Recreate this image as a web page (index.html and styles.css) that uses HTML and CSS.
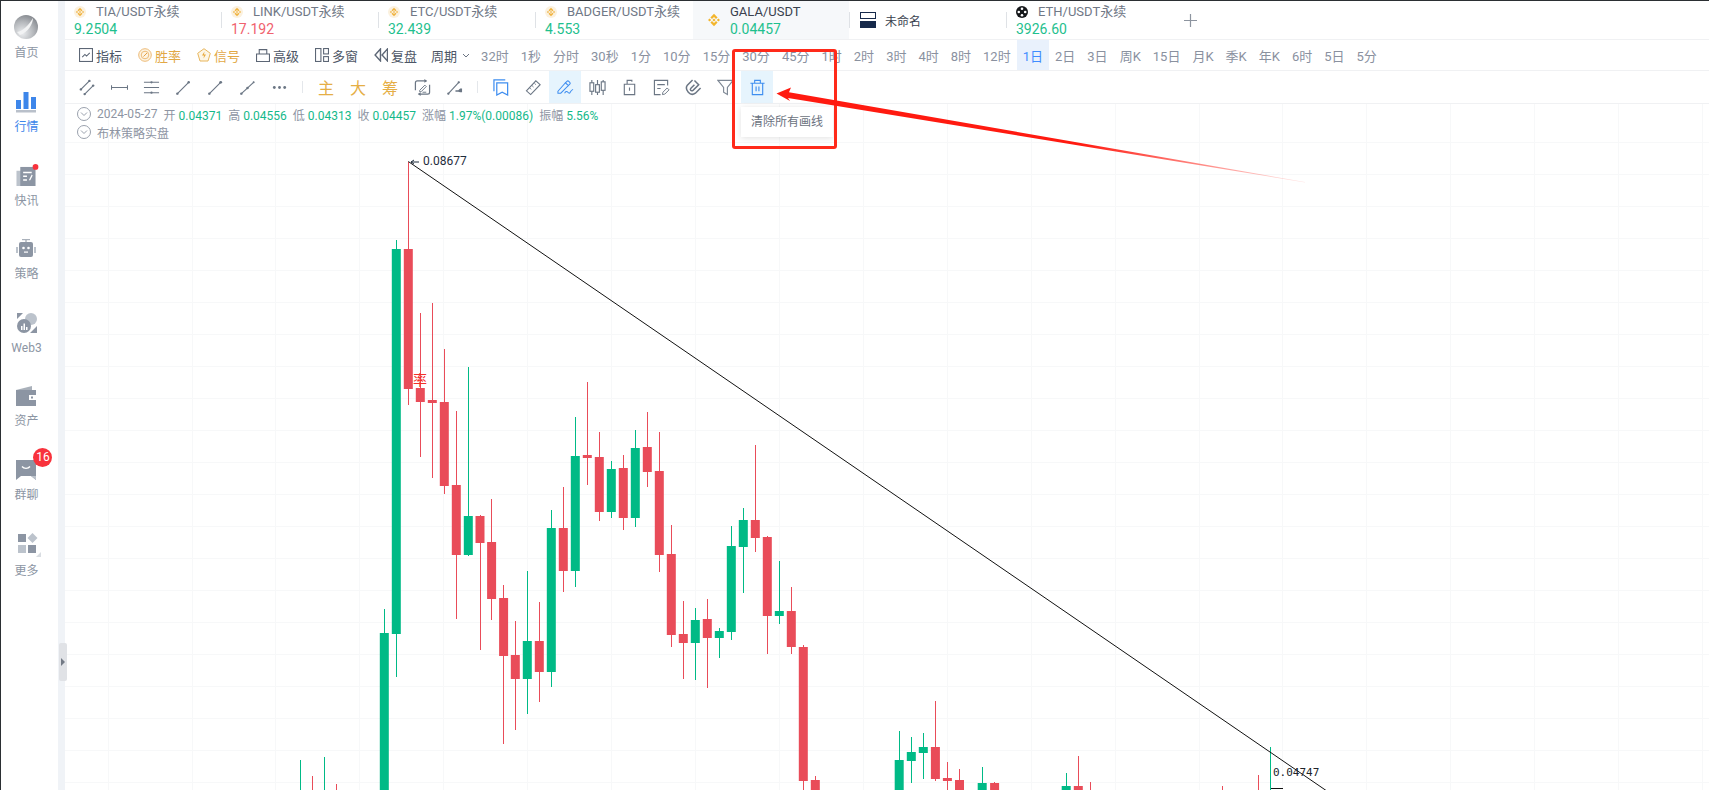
FILE: index.html
```html
<!DOCTYPE html>
<html lang="zh-CN">
<head>
    <meta charset="UTF-8">
    <title>GALA/USDT 行情</title>
    <link rel="stylesheet" href="styles.css">
</head>
<body>

<!-- left nav -->
<nav class="sidebar">
    <a class="nav-item nav-first">
        <svg class="nav-logo" viewBox="0 0 24 24">
            <defs>
                <radialGradient id="ball" cx="35%" cy="75%" r="85%">
                    <stop offset="0" stop-color="#eceef0"/>
                    <stop offset="0.55" stop-color="#b4b7bb"/>
                    <stop offset="1" stop-color="#7d8187"/>
                </radialGradient>
                <path id="bn" d="M7 0.800L10.600 4.400L9 6L7 4L5 6L3.400 4.400ZM7 13.200L3.400 9.600L5 8L7 10L9 8L10.600 9.600ZM2.600 5.400L4.200 7L2.600 8.600L1 7ZM11.400 5.400L13 7L11.400 8.600L9.800 7ZM7 5.400L8.600 7L7 8.600L5.400 7Z"/>
            </defs>
            <circle cx="12" cy="12" r="12" fill="url(#ball)"/>
            <path d="M3 17C9 16 15 10 19 3C19 9 14 17 6 20Z" fill="#f2f3f4"/>
        </svg>
        <span>首页</span>
    </a>
    <a class="nav-item active">
        <svg class="nav-icon" viewBox="0 0 20 20">
            <rect x="0" y="8" width="5" height="9" fill="#3d86ea"/>
            <rect x="7.5" y="0" width="5" height="17" fill="#3d86ea"/>
            <rect x="15" y="5" width="5" height="12" fill="#3d86ea"/>
            <rect x="0" y="18" width="20" height="2.5" fill="#b9c0ca"/>
        </svg>
        <span>行情</span>
    </a>
    <a class="nav-item">
        <svg class="nav-icon" viewBox="0 0 20 21">
            <rect x="0" y="5" width="6" height="16" fill="#bcc3cc"/>
            <rect x="4" y="1" width="16" height="20" fill="#8c95a3"/>
            <path d="M7 6H16V7.5H7ZM7 10H11V11.5H7ZM7 14H11V15.5H7ZM16 9L13 15H14.5L17 10Z" fill="#fff"/>
            <circle cx="20" cy="1" r="3" fill="#f8323c" class="nav-dot"/>
        </svg>
        <span>快讯</span>
    </a>
    <a class="nav-item">
        <svg class="nav-icon" viewBox="0 0 20 20">
            <rect x="9.3" y="0" width="1.4" height="3" fill="#aab1bb"/>
            <rect x="6" y="0" width="8" height="1.2" fill="#aab1bb"/>
            <rect x="0" y="8" width="2" height="6" fill="#bcc3cc"/>
            <rect x="18" y="8" width="2" height="6" fill="#bcc3cc"/>
            <rect x="3" y="3" width="14" height="15" rx="2" fill="#8c95a3"/>
            <circle cx="7.5" cy="9" r="1.3" fill="#fff"/>
            <circle cx="12.5" cy="9" r="1.3" fill="#fff"/>
            <rect x="8" y="12.5" width="4" height="1.2" fill="#fff"/>
        </svg>
        <span>策略</span>
    </a>
    <a class="nav-item">
        <svg class="nav-icon" viewBox="0 0 20 20">
            <path d="M0 0H6L0 6ZM20 20H13L20 13Z" fill="#8c95a3"/>
            <circle cx="14" cy="6" r="6" fill="#bcc3cc"/>
            <circle cx="7" cy="13" r="7" fill="#8c95a3"/>
            <path d="M4 13H5.5V17H4ZM6.5 10.5H8V17H6.5ZM9 14H10.5V17H9Z" fill="#fff"/>
        </svg>
        <span>Web3</span>
    </a>
    <a class="nav-item">
        <svg class="nav-icon" viewBox="0 0 20 20">
            <path d="M0 4L16 0V4Z" fill="#a9b0ba"/>
            <rect x="0" y="4" width="20" height="16" fill="#8c95a3"/>
            <rect x="13" y="9" width="7" height="5" fill="#fff"/>
            <rect x="15" y="10.5" width="2" height="2" fill="#8c95a3"/>
        </svg>
        <span>资产</span>
    </a>
    <a class="nav-item nav-chat">
        <svg class="nav-icon" viewBox="0 0 20 20">
            <path d="M0 0H20V20L15 16H5L0 20Z" fill="#8c95a3"/>
            <path d="M6 16H15L20 20V16Z" fill="#bcc3cc"/>
            <path d="M6 6.5C8 9 12 9 14 6.5" fill="none" stroke="#fff" stroke-width="1.4"/>
        </svg>
        <em class="nav-badge">16</em>
        <span>群聊</span>
    </a>
    <a class="nav-item nav-more">
        <svg class="nav-logo" viewBox="0 0 24 24">
            <rect x="1" y="1" width="8" height="8" fill="#8c95a3"/>
            <path d="M15.5 0L20.5 5L15.5 10L10.500 5Z" fill="#bcc3cc"/>
            <rect x="1" y="12" width="8" height="8" fill="#bcc3cc"/>
            <rect x="11" y="12" width="8" height="8" fill="#8c95a3"/>
            <path d="M19 24L24 19V24Z" fill="#d9dde2"/>
        </svg>
        <span>更多</span>
    </a>
</nav>

<div class="rail">
    <button class="rail-toggle"></button>
</div>

<div class="main">
    <!-- tabs -->
    <div class="tabs">
        <div class="tab">
            <div class="tab-name"><svg class="coin" viewBox="0 0 14 14"><circle cx="7" cy="7" r="7" fill="#fbf1df"/><use href="#bn" fill="#f0b340" transform="translate(1.4 1.4) scale(0.8)"/></svg>TIA/USDT永续</div>
            <div class="tab-price up">9.2504</div>
        </div>
        <i class="tab-sep"></i>
        <div class="tab">
            <div class="tab-name"><svg class="coin" viewBox="0 0 14 14"><circle cx="7" cy="7" r="7" fill="#fbf1df"/><use href="#bn" fill="#f0b340" transform="translate(1.4 1.4) scale(0.8)"/></svg>LINK/USDT永续</div>
            <div class="tab-price down">17.192</div>
        </div>
        <i class="tab-sep"></i>
        <div class="tab">
            <div class="tab-name"><svg class="coin" viewBox="0 0 14 14"><circle cx="7" cy="7" r="7" fill="#fbf1df"/><use href="#bn" fill="#f0b340" transform="translate(1.4 1.4) scale(0.8)"/></svg>ETC/USDT永续</div>
            <div class="tab-price up">32.439</div>
        </div>
        <i class="tab-sep"></i>
        <div class="tab">
            <div class="tab-name"><svg class="coin" viewBox="0 0 14 14"><circle cx="7" cy="7" r="7" fill="#fbf1df"/><use href="#bn" fill="#f0b340" transform="translate(1.4 1.4) scale(0.8)"/></svg>BADGER/USDT永续</div>
            <div class="tab-price up">4.553</div>
        </div>
        <div class="tab tab-active">
            <svg class="coin-big" viewBox="0 0 14 14"><use href="#bn" fill="#f3b52c"/></svg>
            <div>
                <div class="tab-name dark">GALA/USDT</div>
                <div class="tab-price up">0.04457</div>
            </div>
        </div>
        <i class="tab-sep"></i>
        <div class="tab tab-layout">
            <svg class="layout-icon" viewBox="0 0 16 16"><rect x="0.500" y="0.500" width="15" height="6" fill="none" stroke="#16294a"/><rect x="0" y="9" width="16" height="7" fill="#16294a"/></svg>
            <span>未命名</span>
        </div>
        <i class="tab-sep"></i>
        <div class="tab tab-eth">
            <div class="tab-name"><svg class="coin" viewBox="0 0 12 12"><circle cx="6" cy="6" r="6" fill="#15171a"/><circle cx="6" cy="2.800" r="1.300" fill="#fff"/><circle cx="6" cy="9.200" r="1.300" fill="#fff"/><circle cx="2.800" cy="6" r="1.300" fill="#fff"/><circle cx="9.200" cy="6" r="1.300" fill="#fff"/></svg>ETH/USDT永续</div>
            <div class="tab-price up">3926.60</div>
        </div>
        <svg class="tab-add" viewBox="0 0 13 13"><path d="M6.500 0V13M0 6.500H13" stroke="#8d949f" stroke-width="1.200"/></svg>
    </div>

    <!-- indicators + periods -->
    <div class="bar">
        <div class="bar-item">
            <svg class="bar-icon" viewBox="0 0 13 13"><rect x="0.500" y="0.500" width="12" height="12" fill="none" stroke="#5c6675"/><path d="M3 8.500L5.500 6L7 7.500L10 4.500" fill="none" stroke="#5c6675"/></svg>指标
        </div>
        <div class="bar-item gold">
            <svg class="bar-icon" viewBox="0 0 14 14"><circle cx="7" cy="7" r="6.300" fill="#fdf3e2" stroke="#edbb78"/><circle cx="7" cy="7" r="3.800" fill="none" stroke="#edbb78"/><path d="M5.500 8.500L9 5" stroke="#e59f45"/></svg>胜率
        </div>
        <div class="bar-item gold">
            <svg class="bar-icon" viewBox="0 0 14 14"><path d="M7 0.700L13.300 5.300L11 13H3L0.700 5.300Z" fill="#fdf6e6" stroke="#e8b65c"/><path d="M7.500 3.500L5 7.500H7L6.500 10.500L9 6.500H7Z" fill="#e8a93c"/></svg>信号
        </div>
        <div class="bar-item">
            <svg class="bar-icon" viewBox="0 0 13 13"><path d="M0.500 5.500H12.500V12.500H0.500ZM3 5.500V1.500H10V5.500" fill="none" stroke="#5c6675"/></svg>高级
        </div>
        <div class="bar-item">
            <svg class="bar-icon" viewBox="0 0 13 13"><rect x="0.500" y="0.500" width="5" height="12" fill="none" stroke="#5c6675"/><rect x="8" y="0.500" width="4.500" height="5" fill="none" stroke="#5c6675"/><rect x="8" y="8" width="4.500" height="4.500" fill="none" stroke="#5c6675"/></svg>多窗
        </div>
        <div class="bar-item">
            <svg class="bar-icon" viewBox="0 0 13 13"><path d="M6 1L1 6.500L6 12ZM12.500 1L7.500 6.500L12.500 12Z" fill="none" stroke="#5c6675" stroke-width="1.300"/></svg>复盘
        </div>
        <div class="bar-item bar-select">
            周期
            <svg class="chevron" viewBox="0 0 8 5"><path d="M1 1L4 4L7 1" fill="none" stroke="#6b7483"/></svg>
        </div>
        <div class="periods">
            <span>32时</span><span>1秒</span><span>分时</span><span>30秒</span><span>1分</span><span>10分</span><span>15分</span><span>30分</span><span>45分</span><span>1时</span><span>2时</span><span>3时</span><span>4时</span><span>8时</span><span>12时</span><span class="on">1日</span><span>2日</span><span>3日</span><span>周K</span><span>15日</span><span>月K</span><span>季K</span><span>年K</span><span>6时</span><span>5日</span><span>5分</span>
        </div>
    </div>

    <!-- drawing tools -->
    <div class="tools">
        <button class="tool"><svg viewBox="0 0 18 18"><path d="M2 11L11 2M6 16L15 7" stroke="#6b7684" stroke-width="1.200"/><circle cx="2" cy="11" r="1.300" fill="#6b7684"/><circle cx="11" cy="2" r="1.300" fill="#6b7684"/><circle cx="6" cy="16" r="1.300" fill="#6b7684"/><circle cx="15" cy="7" r="1.300" fill="#6b7684"/></svg></button>
        <button class="tool"><svg viewBox="0 0 18 18"><path d="M0.500 6.500V11.500M17.500 6.500V11.500M0.500 9H17.500" stroke="#6b7684" stroke-width="1.200"/></svg></button>
        <button class="tool"><svg viewBox="0 0 18 18"><path d="M1 3.500H17M1 9H17M1 14.500H17" stroke="#6b7684" stroke-width="1.200"/><circle cx="9" cy="3.500" r="1.200" fill="#6b7684"/><circle cx="9" cy="14.500" r="1.200" fill="#6b7684"/></svg></button>
        <button class="tool"><svg viewBox="0 0 18 18"><path d="M2 16L15 3" stroke="#6b7684" stroke-width="1.200"/><circle cx="2.500" cy="15.500" r="1.300" fill="#6b7684"/><circle cx="14.500" cy="3.500" r="1.300" fill="#6b7684"/></svg></button>
        <button class="tool"><svg viewBox="0 0 18 18"><path d="M2 16L15 3" stroke="#6b7684" stroke-width="1.200"/><circle cx="2.500" cy="15.500" r="1.300" fill="#6b7684"/><circle cx="14.500" cy="3.500" r="1.500" fill="#6b7684"/></svg></button>
        <button class="tool"><svg viewBox="0 0 18 18"><path d="M2 16L16 3" stroke="#6b7684" stroke-width="1.200"/><circle cx="2.500" cy="15.500" r="1.300" fill="#6b7684"/><circle cx="9" cy="9.500" r="1.300" fill="#6b7684"/><circle cx="15.500" cy="3.500" r="1" fill="#6b7684"/></svg></button>
        <button class="tool"><svg viewBox="0 0 18 18"><circle cx="3.500" cy="9" r="1.500" fill="#6b7684"/><circle cx="9" cy="9" r="1.500" fill="#6b7684"/><circle cx="14.500" cy="9" r="1.500" fill="#6b7684"/></svg></button>
        <i class="tool-sep"></i>
        <button class="tool tool-text">主</button>
        <button class="tool tool-text">大</button>
        <button class="tool tool-text">筹</button>
        <button class="tool"><svg viewBox="0 0 18 18"><path d="M13 2H3.500Q1.500 2 1.500 4V12M5 16H14.500Q16.500 16 16.500 14V6" fill="none" stroke="#6b7684" stroke-width="1.300"/><path d="M11 0L14 2L11 4ZM7 14L4 16L7 18Z" fill="#6b7684"/><path d="M6 12L11.500 6.500L13 8L7.500 13.500H6ZM9 14H13" fill="none" stroke="#6b7684"/></svg></button>
        <button class="tool"><svg viewBox="0 0 18 18"><path d="M2 16L14 3" stroke="#6b7684" stroke-width="1.200"/><circle cx="2.500" cy="15.500" r="1.200" fill="#6b7684"/><circle cx="13.500" cy="3.500" r="1.200" fill="#6b7684"/><path d="M10 12H13L15 10H17V14H15L13 13.500H10Z" fill="#6b7684"/></svg></button>
        <i class="tool-sep"></i>
        <button class="tool"><svg viewBox="0 0 18 18"><path d="M1 13V1H13" fill="none" stroke="#3f8ef0" stroke-width="1.300"/><path d="M4 4H15.500V17L9.700 14L4 17Z" fill="none" stroke="#3f8ef0" stroke-width="1.300"/></svg></button>
        <button class="tool"><svg viewBox="0 0 18 18"><path d="M1.500 12.500L11.500 2L16 6L6 16.500Z" fill="none" stroke="#6b7684" stroke-width="1.200"/><path d="M5 9.500L6.500 11M7.500 7L9 8.500M10 4.500L11.500 6" stroke="#6b7684"/></svg></button>
        <button class="tool tool-on"><svg viewBox="0 0 18 18"><path d="M1 13L9 4L12 7L4 15H1ZM8 5L10.500 2.500Q11.500 1.500 12.500 2.500L13.500 3.500Q14.500 4.500 13.500 5.500L11 8" fill="none" stroke="#3f8ef0" stroke-width="1.100"/><path d="M8 15Q10 12 11.500 14T14 14T17 11" fill="none" stroke="#3f8ef0" stroke-width="1.100"/></svg></button>
        <button class="tool"><svg viewBox="0 0 18 18"><path d="M3 1V17M9 1V17M15 1V17" stroke="#6b7684" stroke-width="1.200"/><rect x="1" y="4" width="4" height="9" fill="#fff" stroke="#6b7684" stroke-width="1.200"/><rect x="7" y="6" width="4" height="8" fill="#fff" stroke="#6b7684" stroke-width="1.200"/><rect x="13" y="3" width="4" height="9" fill="#fff" stroke="#6b7684" stroke-width="1.200"/></svg></button>
        <button class="tool"><svg viewBox="0 0 18 18"><path d="M3.500 5.500H14.500V16.500H3.500ZM6.500 5.500V1.500H11.500V3M9 9V12.500" fill="none" stroke="#6b7684" stroke-width="1.200"/></svg></button>
        <button class="tool"><svg viewBox="0 0 18 18"><path d="M15.500 7V1.500H1.500V16.500H8M4.500 6H12.500M4.500 10H8" fill="none" stroke="#6b7684" stroke-width="1.200"/><path d="M10 16.500L10.500 14L15 9.500L17 11.500L12.500 16Z" fill="none" stroke="#6b7684"/></svg></button>
        <button class="tool"><svg viewBox="0 0 18 18"><path d="M10 1.500L14.500 6L8.500 12Q7 13 6 12T6.500 9.500L10 6" fill="none" stroke="#6b7684" stroke-width="1.600"/><path d="M8 1L2.500 6.500Q0 10 3.500 14T11 15L16.500 9.500" fill="none" stroke="#6b7684" stroke-width="1.600"/></svg></button>
        <button class="tool"><svg viewBox="0 0 18 18"><path d="M1 1.500H17L11 9V16.500L7 14V9Z" fill="none" stroke="#7d8794" stroke-width="1.200"/></svg></button>
        <div class="tool-wrap">
            <button class="tool tool-on"><svg viewBox="0 0 18 18"><path d="M1.500 4.500H16.500M6 4.500V1.500H12V4.500M3.500 4.500V16.500H14.500V4.500M7.500 8V13M10.500 8V13" fill="none" stroke="#3f8ef0" stroke-width="1.200"/></svg></button>
            <div class="tool-tip">清除所有画线</div>
        </div>
    </div>

    <!-- chart -->
    <div class="chart">
        <svg id="kline" class="kline" viewBox="65 104 1644 686"></svg>
        <div class="legend">
            <div class="legend-row">
                <svg class="fold" viewBox="0 0 14 14"><circle cx="7" cy="7" r="6.500" fill="#fff" stroke="#9aa1ad"/><path d="M4 5.500L7 8.500L10 5.500" fill="none" stroke="#9aa1ad"/></svg>
                <span class="legend-date">2024-05-27</span>
                <span>开 <b>0.04371</b></span>
                <span>高 <b>0.04556</b></span>
                <span>低 <b>0.04313</b></span>
                <span>收 <b>0.04457</b></span>
                <span>涨幅 <b>1.97%(0.00086)</b></span>
                <span>振幅 <b>5.56%</b></span>
            </div>
            <div class="legend-row">
                <svg class="fold" viewBox="0 0 14 14"><circle cx="7" cy="7" r="6.500" fill="#fff" stroke="#9aa1ad"/><path d="M4 5.500L7 8.500L10 5.500" fill="none" stroke="#9aa1ad"/></svg>
                <span class="legend-date">布林策略实盘</span>
            </div>
        </div>
    </div>
</div>

<!-- red markup on top of the screen -->
<div class="mark-box"></div>
<svg class="mark-arrow" viewBox="0 0 1709 790">
    <defs>
        <linearGradient id="fade" gradientUnits="userSpaceOnUse" x1="1080" y1="0" x2="1305" y2="0">
            <stop offset="0" stop-color="#ff1a10"/>
            <stop offset="1" stop-color="#ff1a10" stop-opacity="0.1"/>
        </linearGradient>
    </defs>
    <path d="M776.500 93.500L791 87.500L789 92.200L1305 182L1305 182.400L788 98L790 101Z" fill="url(#fade)"/>
</svg>

<script src="chart.js"></script>
</body>
</html>
```

FILE: styles.css
```css
* {
    box-sizing: border-box;
}

body {
    margin: 0;
    height: 100vh;
    display: flex;
    overflow: hidden;
    position: relative;
    background: #fff;
    border-top: 1px solid #2b2f33;
    border-left: 1px solid #2b2f33;
    font-family: Roboto, "Noto Sans CJK SC", sans-serif;
    font-size: 13px;
    color: #5c6675;
}

svg {
    display: block;
    flex: none;
}

button {
    border: none;
    background: none;
    padding: 0;
    font-family: inherit;
}

/* left nav */
.sidebar {
    width: 57px;
    flex: none;
    padding: 14px 6px 0 0;
    display: flex;
    flex-direction: column;
    align-items: center;
}

.nav-item {
    position: relative;
    display: flex;
    flex-direction: column;
    align-items: center;
    gap: 7px;
    margin-bottom: 30.500px;
    font-size: 12px;
    line-height: 16px;
    color: #8c95a3;
}

.nav-item.active {
    color: #3d86ea;
}

.nav-first {
    gap: 6px;
    margin-bottom: 31px;
}

.nav-more {
    gap: 6px;
}

.nav-icon {
    width: 20px;
    height: 20px;
    overflow: visible;
}

.nav-logo {
    width: 24px;
    height: 24px;
}

.nav-more .nav-logo {
    margin-left: 4px;
}

.nav-badge {
    position: absolute;
    top: -12px;
    left: 19px;
    width: 19px;
    height: 19px;
    border-radius: 50%;
    background: #f8323c;
    color: #fff;
    font-style: normal;
    font-size: 12px;
    line-height: 19px;
    text-align: center;
}

.rail {
    width: 7px;
    flex: none;
    background: #f0f3f7;
    position: relative;
}

.rail-toggle {
    position: absolute;
    left: 1px;
    top: 642px;
    width: 8px;
    height: 38px;
    border-radius: 2px;
    background: #e0e2e6;
    z-index: 2;
}

.rail-toggle::after {
    content: "";
    position: absolute;
    left: 2px;
    top: 15px;
    border-left: 4px solid #737a85;
    border-top: 4px solid transparent;
    border-bottom: 4px solid transparent;
}

.main {
    flex: 1;
    min-width: 0;
    display: flex;
    flex-direction: column;
}

/* tabs */
.tabs {
    height: 39px;
    flex: none;
    display: flex;
    align-items: center;
    border-bottom: 1px solid #f0f1f3;
}

.tab {
    width: 156px;
    height: 100%;
    flex: none;
    padding: 2px 0 0 9px;
}

.tab-sep {
    width: 1px;
    height: 16px;
    flex: none;
    background: #dfe2e6;
}

.tab-name {
    display: flex;
    align-items: center;
    height: 17px;
    font-size: 13px;
    line-height: 17px;
    color: #707886;
    white-space: nowrap;
}

.tab-name.dark {
    color: #39414e;
}

.coin {
    width: 12px;
    height: 12px;
    margin-right: 10px;
}

.tab-price {
    margin-top: 1px;
    font-size: 14px;
    line-height: 17px;
}

.up {
    color: #1fc08e;
}

.down {
    color: #f0626e;
}

.tab-active {
    margin-left: 1px;
    width: 156px;
    padding: 2px 0 0 14px;
    display: flex;
    background: #f6f8fa;
    gap: 9px;
}

.coin-big {
    width: 14px;
    height: 14px;
    margin-top: 10px;
}

.tab-layout {
    display: flex;
    align-items: center;
    gap: 9px;
    padding: 0 0 0 10px;
    font-size: 12px;
    color: #39414e;
}

.layout-icon {
    width: 16px;
    height: 16px;
}

.tab-eth {
    width: 177px;
}

.tab-add {
    width: 13px;
    height: 13px;
}

/* indicators + periods */
.bar {
    height: 31px;
    flex: none;
    display: flex;
    align-items: stretch;
    padding-left: 14px;
    border-bottom: 1px solid #f0f1f3;
    white-space: nowrap;
}

.bar-item {
    display: flex;
    align-items: center;
    gap: 3px;
    margin-right: 16px;
    color: #4d5666;
}

.bar-item.gold {
    color: #e2a845;
}

.bar-icon {
    width: 14px;
    height: 14px;
}

.bar-select {
    gap: 5px;
    margin-left: -2px;
    margin-right: 5px;
}

.chevron {
    width: 8px;
    height: 5px;
}

.periods {
    display: flex;
    align-items: stretch;
}

.periods span {
    display: flex;
    align-items: center;
    padding: 0 6px;
    color: #8a919f;
}

.periods .on {
    background: #e9f1fc;
    color: #3f8cff;
}

/* drawing tools */
.tools {
    height: 33px;
    flex: none;
    display: flex;
    align-items: stretch;
    padding-left: 6px;
    border-bottom: 1px solid #f0f1f3;
}

.tool {
    width: 32px;
    height: 32px;
    flex: none;
    display: flex;
    align-items: center;
    justify-content: center;
}

.tool svg {
    width: 17px;
    height: 17px;
}

.tool-text {
    font-size: 16px;
    color: #e5ae45;
}

.tool-on {
    background: #e6f4fd;
}

.tool-sep {
    width: 1px;
    height: 12px;
    margin: 10px 7px 0;
    flex: none;
    background: #e4e7eb;
}

.tool-wrap {
    position: relative;
}

.tool-tip {
    position: absolute;
    z-index: 3;
    left: 0;
    top: 36px;
    width: 92px;
    height: 30px;
    background: #fff;
    font-size: 12px;
    line-height: 30px;
    text-align: center;
    color: #6b7280;
    box-shadow: 0 1px 6px rgba(0, 0, 0, 0.12);
    white-space: nowrap;
}

/* chart */
.chart {
    flex: 1;
    position: relative;
    overflow: hidden;
}

.kline {
    position: absolute;
    left: 0;
    top: 0;
    width: 1644px;
    height: 686px;
}

.legend {
    position: relative;
    padding: 1px 0 0 12px;
    font-size: 12px;
    color: #8e95a3;
}

.legend-row {
    display: flex;
    align-items: center;
    gap: 6px;
    height: 18px;
    white-space: nowrap;
}

.legend-row b {
    font-weight: normal;
    color: #14b98a;
}

.fold {
    width: 14px;
    height: 14px;
}

/* markup */
.mark-box {
    position: absolute;
    left: 731px;
    top: 48px;
    width: 105px;
    height: 100px;
    border: 3px solid #ff2a1a;
    border-radius: 3px;
    z-index: 5;
}

.mark-arrow {
    position: absolute;
    left: -1px;
    top: -1px;
    width: 1709px;
    height: 790px;
    z-index: 6;
    pointer-events: none;
}
```

FILE: chart.js
```js
// x, wick top, body top, body bottom, wick bottom, colour
const candles = [
    [300.3, 760, 800, 800, 800, 'g'],
    [312.3, 776, 800, 800, 800, 'r'],
    [324.3, 757, 800, 800, 800, 'g'],
    [336.3, 784, 800, 800, 800, 'r'],
    [384.3, 609, 633, 800, 800, 'g'],
    [396.3, 240, 249, 634, 677, 'g'],
    [408.3, 162, 249, 389, 405, 'r'],
    [420.3, 313, 388, 402, 457, 'r'],
    [432.3, 303, 400, 403, 478, 'r'],
    [444.3, 349, 402, 486, 494, 'r'],
    [456.3, 411, 485, 555, 619, 'r'],
    [468.3, 367, 516, 555, 556, 'g'],
    [480.0, 515, 516, 543, 650, 'r'],
    [491.6, 499, 542, 599, 620, 'r'],
    [503.6, 585, 598, 656, 744, 'r'],
    [515.3, 621, 655, 679, 730, 'r'],
    [527.3, 571, 641, 679, 714, 'g'],
    [539.3, 602, 641, 672, 702, 'r'],
    [551.3, 510, 528, 672, 687, 'g'],
    [563.3, 487, 528, 571, 592, 'r'],
    [575.3, 417, 456, 571, 587, 'g'],
    [587.3, 382, 455, 458, 485, 'r'],
    [599.3, 432, 457, 512, 521, 'r'],
    [611.3, 461, 469, 512, 518, 'g'],
    [623.3, 455, 468, 518, 530, 'r'],
    [635.3, 430, 448, 518, 527, 'g'],
    [647.3, 412, 447, 472, 487, 'r'],
    [659.3, 432, 471, 555, 572, 'r'],
    [671.3, 525, 554, 635, 647, 'r'],
    [683.3, 601, 634, 643, 679, 'r'],
    [695.3, 608, 620, 643, 680, 'g'],
    [707.3, 599, 619, 638, 688, 'r'],
    [719.3, 628, 631, 638, 658, 'g'],
    [731.3, 526, 546, 632, 640, 'g'],
    [743.3, 508, 520, 547, 593, 'g'],
    [755.3, 445, 520, 538, 552, 'r'],
    [767.3, 536, 537, 616, 654, 'r'],
    [779.3, 561, 611, 616, 624, 'g'],
    [791.3, 587, 611, 647, 654, 'r'],
    [803.3, 645, 647, 781, 800, 'r'],
    [815.3, 776, 780, 800, 800, 'r'],
    [899.2, 731, 760, 800, 800, 'g'],
    [911.3, 737, 752, 761, 783, 'g'],
    [923.3, 733, 747, 753, 779, 'g'],
    [935.4, 701, 747, 779, 781, 'r'],
    [947.4, 762, 778, 781, 800, 'r'],
    [959.5, 769, 780, 800, 800, 'r'],
    [982.2, 767, 783, 800, 800, 'g'],
    [994.6, 782, 783, 800, 800, 'r'],
    [1066.2, 773, 786, 800, 800, 'g'],
    [1078.3, 756, 786, 800, 800, 'r'],
    [1090.3, 782, 800, 800, 800, 'r'],
    [1222.2, 786, 800, 800, 800, 'r'],
    [1258.4, 775, 800, 800, 800, 'r'],
    [1270.4, 747, 800, 800, 800, 'g']
];

const colors = { g: '#00ba86', r: '#e94c59' };
let out = '';

// grid
for (let x = 107.6; x < 1709; x += 83.92) {
    out += `<rect x="${Math.round(x)}" y="104" width="1" height="686" fill="#f7f8f9"/>`;
}
for (let y = 142; y < 790; y += 32) {
    out += `<rect x="65" y="${y}" width="1644" height="1" fill="#f7f8f9"/>`;
}

// candles
candles.forEach(function (c) {
    const fill = colors[c[5]];
    out += `<rect x="${Math.floor(c[0])}" y="${c[1]}" width="1" height="${c[4] - c[1]}" fill="${fill}"/>`;
    if (c[3] > c[2]) {
        out += `<rect x="${c[0] - 4.5}" y="${c[2]}" width="9" height="${c[3] - c[2]}" fill="${fill}"/>`;
    }
});

// trend line and labels
out += '<path d="M408.300 161.500L1340 800" stroke="#111" stroke-width="1" fill="none"/>';
out += '<path d="M411 162H419M411 162L414 160M411 162L414 164" stroke="#1f2d3d" fill="none"/>';
out += '<text x="423" y="165" font-size="12" fill="#1f2d3d">0.08677</text>';
out += '<text x="413" y="385" font-size="14" fill="#f3302a">率</text>';
out += '<text x="1273" y="776" font-size="11" font-family="DejaVu Sans Mono, monospace" fill="#20242a">0.04747</text>';
out += '<rect x="1271" y="788" width="12" height="1" fill="#111"/>';

document.getElementById('kline').innerHTML = out;
```
